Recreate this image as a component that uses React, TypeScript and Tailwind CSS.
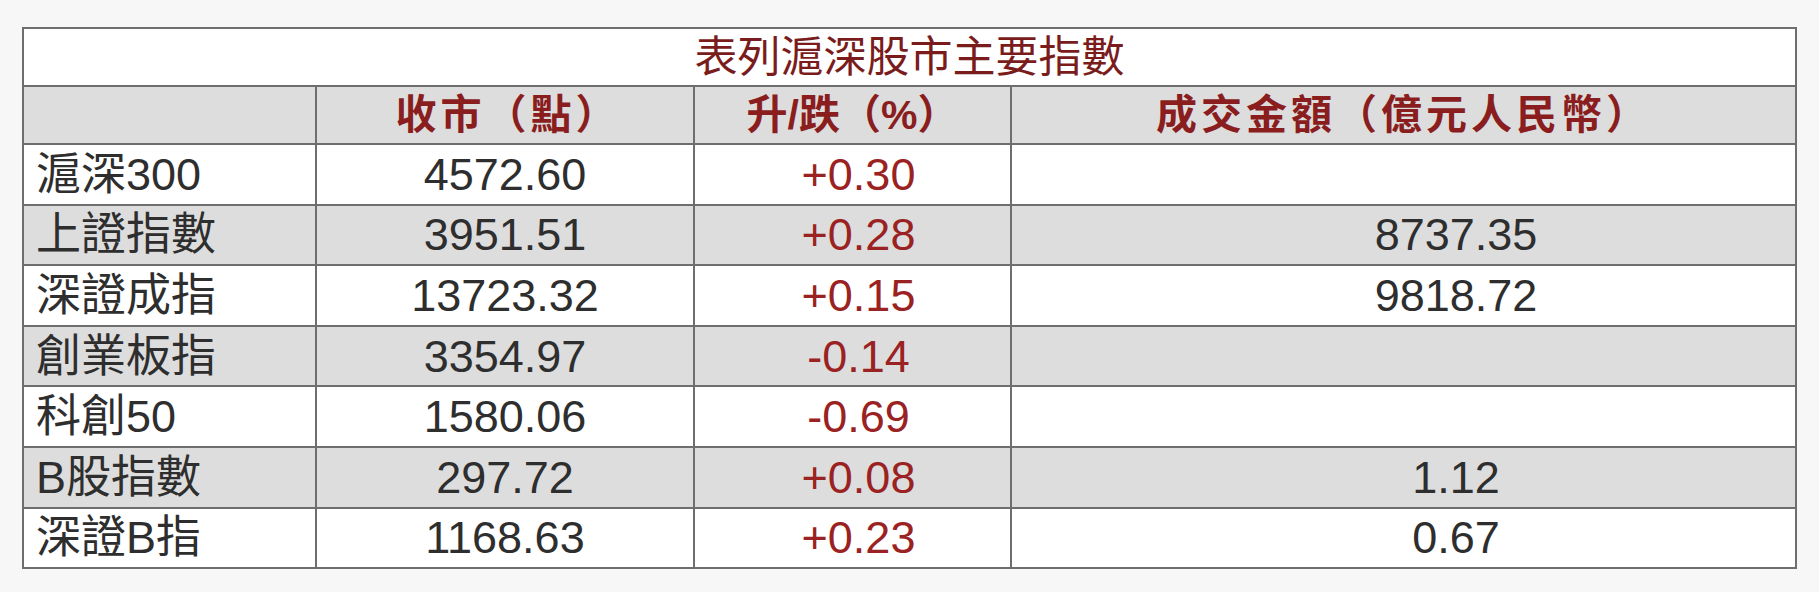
const ROWS: { name: string; close: string; change: string; turnover: string }[] = [
  { name: "滬深300", close: "4572.60", change: "+0.30", turnover: "" },
  { name: "上證指數", close: "3951.51", change: "+0.28", turnover: "8737.35" },
  { name: "深證成指", close: "13723.32", change: "+0.15", turnover: "9818.72" },
  { name: "創業板指", close: "3354.97", change: "-0.14", turnover: "" },
  { name: "科創50", close: "1580.06", change: "-0.69", turnover: "" },
  { name: "B股指數", close: "297.72", change: "+0.08", turnover: "1.12" },
  { name: "深證B指", close: "1168.63", change: "+0.23", turnover: "0.67" },
];

const FONT = "font-['Liberation_Sans','Noto_Sans_CJK_TC',sans-serif]";

export default function App() {
  return (
    <div className={`min-h-[592px] w-[1819px] bg-[#f7f7f7] pl-[22px] pt-[27px] ${FONT}`}>
      <table className="w-[1775px] table-fixed border-collapse bg-white">
        <colgroup>
          <col className="w-[293px]" />
          <col className="w-[378px]" />
          <col className="w-[317px]" />
          <col />
        </colgroup>
        <thead>
          <tr className="h-[58px]">
            <th
              colSpan={4}
              className="border-2 border-[#6e6e6e] p-0 text-center text-[43px] font-normal leading-none text-[#7a1c1c]"
            >
              表列滬深股市主要指數
            </th>
          </tr>
          <tr className="h-[58px] bg-[#dddddd] text-[41px] font-bold leading-none text-[#8a1d1d]">
            <th className="border-2 border-[#6e6e6e] p-0" />
            <th className="border-2 border-[#6e6e6e] p-0 pl-[6px] text-center tracking-[4px]">收市（點）</th>
            <th className="border-2 border-[#6e6e6e] p-0 text-center">升/跌（%）</th>
            <th className="border-2 border-[#6e6e6e] p-0 text-center tracking-[4px]">成交金額（億元人民幣）</th>
          </tr>
        </thead>
        <tbody className="text-[45px] leading-none text-[#2e2e2e]">
          {ROWS.map((r, i) => (
            <tr key={r.name} className={`h-[60.6px] ${i % 2 === 1 ? "bg-[#dddddd]" : "bg-white"}`}>
              <td className="border-2 border-[#6e6e6e] py-0 pl-[12px] text-left">{r.name}</td>
              <td className="border-2 border-[#6e6e6e] p-0 text-center">{r.close}</td>
              <td className="border-2 border-[#6e6e6e] py-0 pl-[12px] text-center text-[#9a2222]">{r.change}</td>
              <td className="border-2 border-[#6e6e6e] py-0 pl-[105px] text-center">{r.turnover}</td>
            </tr>
          ))}
        </tbody>
      </table>
    </div>
  );
}
